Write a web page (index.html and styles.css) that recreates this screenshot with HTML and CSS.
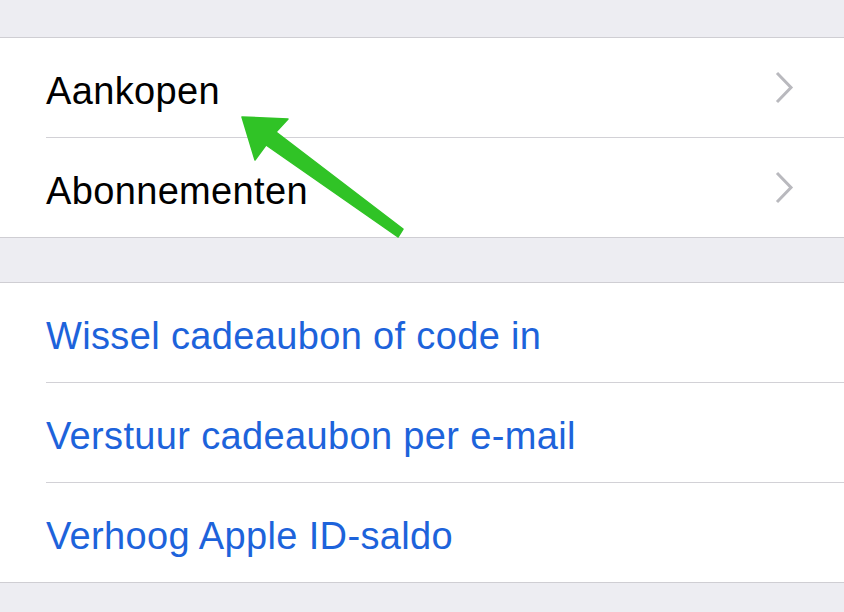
FILE: index.html
```html
<!DOCTYPE html>
<html lang="nl">
<head>
  <meta charset="UTF-8">
  <title>Aankopen</title>
  <meta name="viewport" content="width=device-width, initial-scale=1">
  <link rel="stylesheet" href="styles.css">
</head>
<body>
  <div class="page">
    <div class="group">
      <div class="row">
        <span class="row-label">Aankopen</span>
        <svg class="chevron" width="19" height="33" viewBox="0 0 19 33"><path d="M2 2 L16 16.5 L2 31" fill="none" stroke="#b9b9be" stroke-width="3"/></svg>
      </div>
      <div class="row">
        <span class="row-label">Abonnementen</span>
        <svg class="chevron" width="19" height="33" viewBox="0 0 19 33"><path d="M2 2 L16 16.5 L2 31" fill="none" stroke="#b9b9be" stroke-width="3"/></svg>
      </div>
    </div>

    <div class="group">
      <div class="row"><span class="row-label link">Wissel cadeaubon of code in</span></div>
      <div class="row"><span class="row-label link">Verstuur cadeaubon per e-mail</span></div>
      <div class="row"><span class="row-label link">Verhoog Apple ID-saldo</span></div>
    </div>

    <!-- groene pijl bovenop de lijst -->
    <svg class="arrow" width="844" height="612" viewBox="0 0 844 612">
      <polygon points="242,117 288,119 276,132 403,229 398,237 266,145 255,160" fill="#30c326" stroke="#30c326" stroke-width="1.5" stroke-linejoin="round"/>
    </svg>
  </div>
</body>
</html>
```

FILE: styles.css
```css
* {
  box-sizing: border-box;
}
body {
  margin: 0;
  background: #ededf2;
  font-family: "Liberation Sans", Arial, sans-serif;
}

.page {
  position: relative;
  width: 844px;
  height: 612px;
  padding-top: 37px;
  overflow: hidden;
}

.group {
  background: #ffffff;
  border-top: 1px solid #cfced3;
  border-bottom: 1px solid #cfced3;
  margin-bottom: 44px;
}

.row {
  display: flex;
  align-items: center;
  height: 100px;
  margin-left: 46px;
  padding: 8px 50px 0 0;
  border-bottom: 1px solid #d2d1d6;
}

.row:last-child {
  height: 99px;
  border-bottom: none;
}

.row-label {
  flex: 1;
  font-size: 38px;
  color: #000000;
  letter-spacing: 0.35px;
}

.row-label.link {
  color: #1d63db;
}

.chevron {
  display: block;
  margin-top: -8px;
}

.arrow {
  position: absolute;
  top: 0;
  left: 0;
  pointer-events: none;
}
```
